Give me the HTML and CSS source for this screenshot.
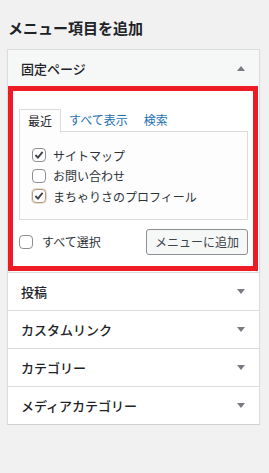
FILE: index.html
```html
<!DOCTYPE html>
<html lang="ja">

<head>
    <meta charset="UTF-8">
    <meta name="viewport" content="width=device-width, initial-scale=1.0">
    <title>メニュー項目を追加</title>
    <link rel="stylesheet" href="styles.css">
</head>

<body>
    <div class="wrap">
        <h2 class="box-title">メニュー項目を追加</h2>

        <div class="accordion">
            <div class="section open">
                <div class="section-title">
                    <span>固定ページ</span>
                    <span class="arrow up"></span>
                </div>
                <div class="section-body">
                    <div class="tabs">
                        <span class="tab active">最近</span>
                        <span class="tab">すべて表示</span>
                        <span class="tab">検索</span>
                    </div>
                    <div class="tabs-panel">
                        <label class="item">
                            <span class="check checked"><svg viewBox="0 0 14 14"><path d="M2.8 7 L5.8 10 L11.2 3.4" /></svg></span>
                            サイトマップ
                        </label>
                        <label class="item">
                            <span class="check"></span>
                            お問い合わせ
                        </label>
                        <label class="item">
                            <span class="check checked focus"><svg viewBox="0 0 14 14"><path d="M2.8 7 L5.8 10 L11.2 3.4" /></svg></span>
                            まちゃりさのプロフィール
                        </label>
                    </div>
                    <div class="actions">
                        <label class="select-all">
                            <span class="check"></span>
                            すべて選択
                        </label>
                        <button class="add-button">メニューに追加</button>
                    </div>
                </div>
            </div>

            <div class="section">
                <div class="section-title">
                    <span>投稿</span>
                    <span class="arrow"></span>
                </div>
            </div>
            <div class="section">
                <div class="section-title">
                    <span>カスタムリンク</span>
                    <span class="arrow"></span>
                </div>
            </div>
            <div class="section">
                <div class="section-title">
                    <span>カテゴリー</span>
                    <span class="arrow"></span>
                </div>
            </div>
            <div class="section">
                <div class="section-title">
                    <span>メディアカテゴリー</span>
                    <span class="arrow"></span>
                </div>
            </div>
        </div>
    </div>
</body>

</html>
```

FILE: styles.css
```css
body {
    margin: 0;
    background-color: #f1f1f1;
    font-family: "Noto Sans CJK JP", "Noto Sans", sans-serif;
    color: #1d2327;
}

.wrap {
    padding: 17px 9px 0 7px;
}

.box-title {
    margin: 0 0 0 1px;
    font-size: 15px;
    line-height: 21px;
    font-weight: 700;
    color: #1d2327;
}

.accordion {
    margin-top: 11px;
    background-color: #fff;
    border: 1px solid #dcdcde;
    border-bottom-color: #d0d0d2;
    box-shadow: 0 1px 1px rgba(0, 0, 0, 0.08);
}

.section + .section {
    border-top: 1px solid #dcdcde;
}

.section-title {
    height: 37px;
    padding: 0 14px 0 13px;
    display: flex;
    align-items: center;
    justify-content: space-between;
    font-size: 13px;
    font-weight: 500;
    color: #1d2327;
}

.section.open .section-title {
    height: 36px;
    background-color: #f6f7f7;
}

.arrow {
    width: 0;
    height: 0;
    border-left: 4px solid transparent;
    border-right: 4px solid transparent;
    border-top: 5px solid #787c82;
}

.arrow.up {
    border-top: none;
    border-bottom: 5px solid #787c82;
}

/* red highlight round the open panel */
.section-body {
    border: 5px solid #ed1c24;
    margin: 0 1px 1px 0;
    padding: 18px 5px 11px 6px;
}

.tabs {
    display: flex;
    height: 22px;
    font-size: 12px;
    line-height: 21px;
}

.tab {
    padding: 0 8px;
    color: #2271b1;
}

.tab.active {
    color: #1d2327;
    border: 1px solid #dcdcde;
    border-bottom: none;
    background-color: #fdfdfd;
    height: 23px;
    position: relative;
    z-index: 1;
}

.tabs-panel {
    border: 1px solid #dcdcde;
    background-color: #fdfdfd;
    padding: 13px 12px 12px;
}

.item {
    display: flex;
    align-items: center;
    height: 20.5px;
    font-size: 12px;
    color: #2c3338;
}

.check {
    width: 14px;
    height: 14px;
    box-sizing: border-box;
    border: 1px solid #8c8f94;
    border-radius: 4px;
    background-color: #fff;
    margin-right: 7px;
    display: flex;
    align-items: center;
    justify-content: center;
}

.check svg {
    width: 12px;
    height: 12px;
}

.check path {
    fill: none;
    stroke: #3c434a;
    stroke-width: 2.2;
}

.check.focus {
    border-color: #b89d82;
    box-shadow: 0 0 0 1px rgba(184, 157, 130, 0.35);
}

.actions {
    margin-top: 9px;
    display: flex;
    align-items: center;
    justify-content: space-between;
}

.select-all {
    display: flex;
    align-items: center;
    font-size: 12px;
    color: #2c3338;
}

.select-all .check {
    margin-right: 9px;
}

.add-button {
    height: 26px;
    padding: 0 8px;
    font-family: inherit;
    font-size: 12px;
    color: #3c434a;
    background-color: #f6f7f7;
    border: 1px solid #8c8f94;
    border-radius: 3px;
}
```
